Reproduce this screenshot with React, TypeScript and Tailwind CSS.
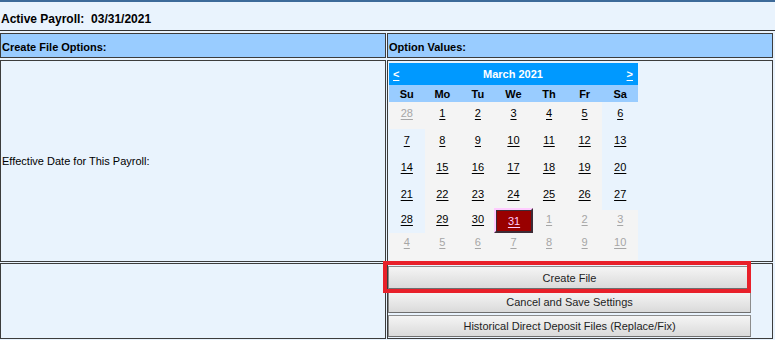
import React from 'react';

type Day = { n: number; other?: boolean; selected?: boolean };

const cur = (n: number): Day => ({ n });
const oth = (n: number): Day => ({ n, other: true });

const weeks: Day[][] = [
  [oth(28), cur(1), cur(2), cur(3), cur(4), cur(5), cur(6)],
  [cur(7), cur(8), cur(9), cur(10), cur(11), cur(12), cur(13)],
  [cur(14), cur(15), cur(16), cur(17), cur(18), cur(19), cur(20)],
  [cur(21), cur(22), cur(23), cur(24), cur(25), cur(26), cur(27)],
  [cur(28), cur(29), cur(30), { n: 31, selected: true }, oth(1), oth(2), oth(3)],
  [oth(4), oth(5), oth(6), oth(7), oth(8), oth(9), oth(10)],
];

// row heights and top padding tuned to the picture
const rowStyle = [
  'h-[27px] pt-[4px]',
  'h-[27px] pt-[4px]',
  'h-[27px] pt-[4px]',
  'h-[27px] pt-[4px]',
  'h-[23px] pt-[2px]',
  'h-[27px] pt-[2px]',
];

const dayNames = ['Su', 'Mo', 'Tu', 'We', 'Th', 'Fr', 'Sa'];

function Calendar() {
  return (
    <div className="ml-[1px] mt-[2px] w-[249px] bg-[#f4f4f4] text-[11px] leading-[14px]">
      {/* month title */}
      <div className="flex h-[22px] items-center justify-between bg-[#0099ff] pl-[4px] pr-[5px] font-bold text-white">
        <span className="underline underline-offset-2">&lt;</span>
        <span>March 2021</span>
        <span className="underline underline-offset-2">&gt;</span>
      </div>
      <div className="grid h-[17px] grid-cols-7 items-center bg-[#99ccff] font-bold text-black">
        {dayNames.map((d) => (
          <span key={d} className="text-center">{d}</span>
        ))}
      </div>
      {weeks.map((week, wi) => (
        <div key={wi} className="grid grid-cols-7">
          {week.map((day, di) => {
            const weekend = (di === 0 || di === 6) && !day.other;
            return (
              <div
                key={di}
                className={`flex justify-center ${rowStyle[wi]} ${weekend ? 'bg-[#e9f3fd]' : ''}`}
              >
                {day.selected ? (
                  <div className="-mt-[4px] h-[25px] w-[39px] shrink-0 border-2 border-t-[#ffccff] border-l-[#ffccff] border-b-[#3d2b36] border-r-[#3d2b36]">
                    <div className="flex h-full items-center justify-center border-t border-l border-t-[#3d2b36] border-l-[#3d2b36] bg-[#990000] text-[#ffccff] underline underline-offset-2">
                      {day.n}
                    </div>
                  </div>
                ) : (
                  <span
                    className={`underline underline-offset-2 ${day.other ? 'text-[#a6a6a6]' : 'text-black'}`}
                  >
                    {day.n}
                  </span>
                )}
              </div>
            );
          })}
        </div>
      ))}
      <div className="h-[1px]" />
    </div>
  );
}

function ActionButton({ label, tall }: { label: string; tall?: boolean }) {
  return (
    <button
      className={`flex w-[363px] items-center justify-center border border-[#8c8c8c] border-b-[#6e6e6e] bg-gradient-to-b from-[#f5f5f5] to-[#dadada] text-[11px] text-[#1e1e1e] ${
        tall ? 'h-[23px]' : 'h-[22px]'
      }`}
    >
      {label}
    </button>
  );
}

export default function App() {
  return (
    <div
      className="relative h-[340px] w-[775px] overflow-hidden bg-[#e9f3fd] text-black"
      style={{ fontFamily: '"Liberation Sans", Arial, sans-serif' }}
    >
      <div className="h-[2px] bg-[#3d6a99]" />
      <div className="h-[28px] whitespace-pre pl-[1px] pt-[10px] text-[12px] font-bold leading-[14px]">
        Active Payroll:  03/31/2021
      </div>

      {/* settings table */}
      <div className="h-px bg-[#333333]" />
      <div className="mt-[2px] grid w-[773px] grid-cols-[386px_386px] gap-x-px gap-y-[2px] text-[11px] leading-[14px]">
        <div className="flex h-[25px] items-center border border-[#3c3c3c] bg-[#99ccff] pl-[1px] pt-[2px] font-bold">
          Create File Options:
        </div>
        <div className="flex h-[25px] items-center border border-[#3c3c3c] bg-[#99ccff] pl-[1px] pt-[2px] font-bold">
          Option Values:
        </div>

        <div className="flex h-[202px] items-center border border-[#3c3c3c] pl-[1px]">
          Effective Date for This Payroll:
        </div>
        <div className="h-[202px] border border-[#3c3c3c]">
          <Calendar />
        </div>

        <div className="-mt-px h-[76px] border border-[#3c3c3c]" />
        <div className="relative -mt-px flex h-[76px] flex-col gap-[2px] border border-[#3c3c3c] pt-[2px]">
          <ActionButton label="Create File" tall />
          <ActionButton label="Cancel and Save Settings" />
          <ActionButton label="Historical Direct Deposit Files (Replace/Fix)" />
          {/* highlight drawn over the first button */}
          <div className="pointer-events-none absolute -left-[5px] -top-[3px] h-[32px] w-[368px] border-4 border-[#e8202a]" />
        </div>
      </div>
    </div>
  );
}
